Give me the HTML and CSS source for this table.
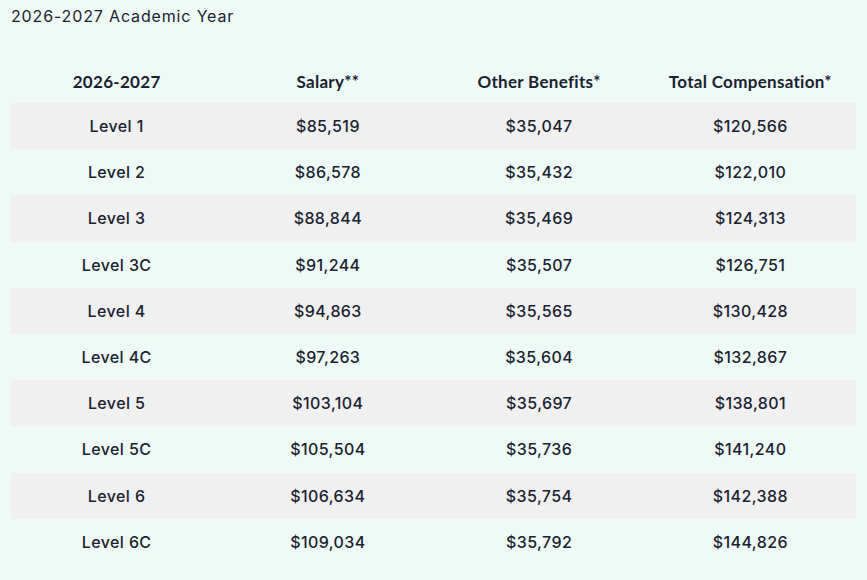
FILE: index.html
```html
<!DOCTYPE html>
<html>
<head>
<meta charset="utf-8">
<link rel="stylesheet" href="styles.css">
</head>
<body>
<div class="page">
  <div class="title">2026-2027 Academic Year</div>
  <table class="comp">
    <thead>
      <tr><th>2026-2027</th><th>Salary**</th><th>Other Benefits*</th><th>Total Compensation*</th></tr>
    </thead>
    <tbody>
      <tr><td>Level 1</td><td>$85,519</td><td>$35,047</td><td>$120,566</td></tr>
      <tr><td>Level 2</td><td>$86,578</td><td>$35,432</td><td>$122,010</td></tr>
      <tr><td>Level 3</td><td>$88,844</td><td>$35,469</td><td>$124,313</td></tr>
      <tr><td>Level 3C</td><td>$91,244</td><td>$35,507</td><td>$126,751</td></tr>
      <tr><td>Level 4</td><td>$94,863</td><td>$35,565</td><td>$130,428</td></tr>
      <tr><td>Level 4C</td><td>$97,263</td><td>$35,604</td><td>$132,867</td></tr>
      <tr><td>Level 5</td><td>$103,104</td><td>$35,697</td><td>$138,801</td></tr>
      <tr><td>Level 5C</td><td>$105,504</td><td>$35,736</td><td>$141,240</td></tr>
      <tr><td>Level 6</td><td>$106,634</td><td>$35,754</td><td>$142,388</td></tr>
      <tr><td>Level 6C</td><td>$109,034</td><td>$35,792</td><td>$144,826</td></tr>
    </tbody>
  </table>
</div>
</body>
</html>
```
FILE: styles.css
```css
html, body {
  margin: 0;
  padding: 0;
  background: #effaf6;
}
.page {
  padding: 5px 11px 0 11px;
  color: #1a2230;
}
.title {
  font-family: "Inter", sans-serif;
  font-size: 16px;
  line-height: 22px;
  letter-spacing: 0.85px;
}
.comp {
  width: 100%;
  border-collapse: collapse;
  margin-top: 33px;
  table-layout: fixed;
}
.comp th {
  font-family: "Lato", sans-serif;
  font-weight: 700;
  font-size: 17px;
  height: 43px;
  text-align: center;
  padding: 0;
  letter-spacing: 0.3px;
}
.comp td {
  font-family: "Inter", sans-serif;
  font-weight: 500;
  font-size: 16px;
  height: 46.2px;
  text-align: center;
  padding: 0;
  letter-spacing: 0.4px;
}
.comp tbody tr:nth-child(odd) {
  background: #f0f0f0;
}
```
